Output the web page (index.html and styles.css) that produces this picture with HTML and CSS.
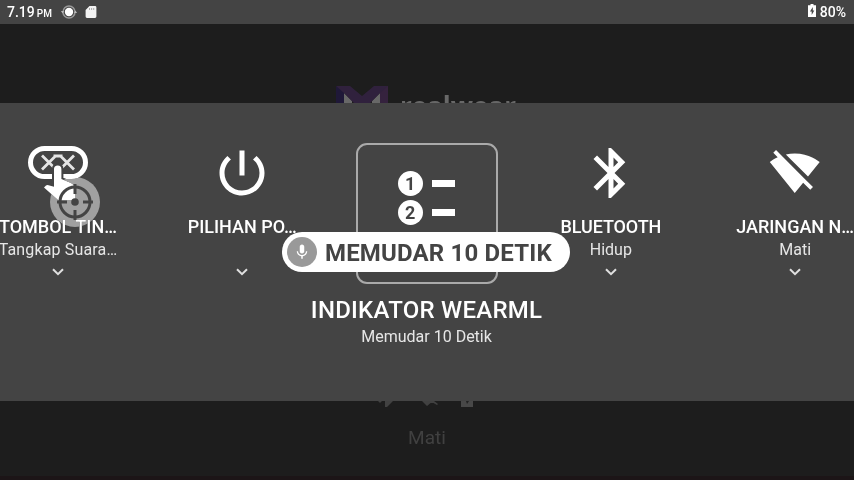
FILE: index.html
```
<!DOCTYPE html>
<html lang="id">
<head>
<meta charset="utf-8">
<title>Indikator WearML</title>
<link rel="stylesheet" href="styles.css">
</head>
<body>
<header class="status">
  <span class="time">7.19<small>PM</small></span>
  <svg class="status-cam" viewBox="0 0 16 16"><circle cx="8" cy="8" r="6" fill="none" stroke="#999" stroke-width="1.500"/><circle cx="8" cy="8" r="4.200" fill="#fff"/><path d="M0 7h3L1.500 9.500zM13 9h3l-1.500-2.500z" fill="#bbb"/></svg>
  <svg class="status-sd" viewBox="0 0 12 14"><path d="M4.500 1H10a1.400 1.400 0 0 1 1.400 1.400v9.200A1.400 1.400 0 0 1 10 13H2A1.400 1.400 0 0 1 .6 11.600V5z" fill="#f3f3f3"/><path d="M4.500 3v2M6.600 3v2M8.700 3v2" stroke="#999" stroke-width=".8"/></svg>
  <svg class="status-battery" viewBox="0 0 8 14"><path d="M2.500 0h3v1.300H8V13H0V1.300h2.500z" fill="#fff"/><path d="M4.800 3L2 7.600h1.700V11L6.300 6.400H4.800z" fill="#444"/></svg>
  <span class="percent">80%</span>
</header>
<main class="screen">
  <div class="home-top">
    <svg class="logo" viewBox="0 0 52 52"><path d="M8 7l8 8v37H8zM44 7l-8 8v37h8z" fill="#686868"/><path d="M0 0h14l12 10L38 0h14v52h-8V7L26 25 8 7v5z" fill="#30213d"/><path d="M0 0l8 7v45H0z" fill="#1f1838"/><path d="M44 7l8-7v52h-8z" fill="#35223e"/></svg>
    <span class="brand">realwear</span>
  </div>
  <section class="panel">
    <div class="cards">
      <article class="card">
        <div class="icon"><svg width="60" height="60" viewBox="28 143 60 60"><rect x="30.500" y="148.500" width="55" height="28" rx="14" fill="none" stroke="#fff" stroke-width="5"/><path d="M42 155.500l14 14M56 155.500l-14 14M60 155.500l14 14M74 155.500l-14 14M53.500 156h9" fill="none" stroke="#e5e5e5" stroke-width="2.800"/><path d="M54 169q0-3.500 3.700-3.500t3.700 3.500v10l9.600 4q4 2 4 6V200H58l-14-12.500 2-2q1-.8 2.500-.3l5.500 1.500z" fill="#fff" stroke="#444" stroke-width="4" paint-order="stroke"/></svg></div>
        <h3>TOMBOL TIN…</h3><p class="wide">Tangkap Suara…</p>
        <svg class="chevron" viewBox="0 0 12 8"><path d="M1 1.200l5 5 5-5"/></svg>
      </article>
      <article class="card">
        <div class="icon"><svg width="60" height="60" viewBox="0 0 24 24"><path fill="#fff" d="M13 3h-2v10h2V3zm4.830 2.170l-1.420 1.420C17.990 7.860 19 9.810 19 12c0 3.870-3.130 7-7 7s-7-3.130-7-7c0-2.190 1.010-4.140 2.580-5.420L6.170 5.170C4.230 6.820 3 9.260 3 12c0 4.970 4.030 9 9 9s9-4.030 9-9c0-2.740-1.230-5.180-3.170-6.830z"/></svg></div>
        <h3>PILIHAN PO…</h3><p>&nbsp;</p>
        <svg class="chevron" viewBox="0 0 12 8"><path d="M1 1.200l5 5 5-5"/></svg>
      </article>
      <article class="card selected">
        <div class="frame"><div class="levels"><b>1</b><i></i><b>2</b><i></i></div></div>
        <h2>INDIKATOR WEARML</h2><p>Memudar 10 Detik</p>
      </article>
      <article class="card">
        <div class="icon"><svg width="60" height="60" viewBox="0 0 24 24"><path fill="#fff" d="M17.710 7.710L12 2h-1v7.590L6.410 5 5 6.410 10.590 12 5 17.590 6.410 19 11 14.410V22h1l5.710-5.710-4.300-4.290 4.300-4.290zM13 5.830l1.880 1.880L13 9.590V5.830zm1.880 10.460L13 18.170v-3.760l1.880 1.880z"/></svg></div>
        <h3 class="tight">BLUETOOTH</h3><p>Hidup</p>
        <svg class="chevron" viewBox="0 0 12 8"><path d="M1 1.200l5 5 5-5"/></svg>
      </article>
      <article class="card">
        <div class="icon"><svg width="51.500" height="51.500" viewBox="0 0 24 24"><path fill="#fff" d="M23.640 7c-.45-.34-4.930-4-11.640-4-1.500 0-2.890.19-4.150.48L18.180 13.800 23.640 7zm-6.600 8.220L3.270 1.440 2 2.720l2.050 2.060C1.910 5.760.59 6.820.36 7l11.630 14.490.01.01.01-.01 3.900-4.860 3.320 3.320 1.270-1.270-3.460-3.460z"/></svg></div>
        <h3>JARINGAN N…</h3><p>Mati</p>
        <svg class="chevron" viewBox="0 0 12 8"><path d="M1 1.200l5 5 5-5"/></svg>
      </article>
    </div>
  </section>
  <div class="home-bottom">
    <svg class="mini" viewBox="0 0 100 8"><path d="M1 0l2 2 2-2zM8 0h8l-6 6H8zM45 0h11l-6 5zM53 0h4l4 3-1 1z" fill="#414141"/><path d="M84 0h12v6H84z" fill="#484848"/><path d="M89 0h3l-2 3z" fill="#222"/></svg>
    <span>Mati</span>
  </div>
</main>
<div class="target disc"></div>
<svg class="target" viewBox="0 0 50 50"><circle cx="25" cy="25" r="15" fill="none" stroke="#444" stroke-width="3"/><circle cx="25" cy="25" r="3.800" fill="#444"/><path d="M25 7v10M25 33v10M7 25h10M33 25h10" stroke="#444" stroke-width="3"/></svg>
<div class="voice"><span class="mic"><svg width="18" height="18" viewBox="0 0 24 24"><path fill="#fff" d="M12 14c1.660 0 2.990-1.340 2.990-3L15 5c0-1.660-1.340-3-3-3S9 3.340 9 5v6c0 1.660 1.340 3 3 3zm5.300-3c0 3-2.540 5.100-5.300 5.100S6.700 14 6.700 11H5c0 3.410 2.720 6.230 6 6.720V21h2v-3.280c3.280-.48 6-3.300 6-6.720h-1.700z"/></svg></span><strong>MEMUDAR 10 DETIK</strong></div>
</body>
</html>
```
FILE: styles.css
```
* { box-sizing: border-box; }
body { margin: 0; width: 854px; height: 480px; overflow: hidden; position: relative; background: #1d1d1d; color: #fff; font-family: Roboto, sans-serif; display: flex; flex-direction: column; }
h2, h3, p { margin: 0; white-space: nowrap; text-align: center; }
svg { display: block; flex: none; }
.status { height: 24px; background: #444; display: flex; align-items: center; padding: 0 8px 0 7px; font-size: 14px; font-weight: 500; }
.time { width: 54px; font-size: 14px; }
.time small { font-size: 10px; margin-left: 2px; }
.status-cam { width: 16px; height: 16px; margin-right: 8px; }
.status-sd { width: 12px; height: 14px; }
.status-battery { width: 8px; height: 14px; margin-left: auto; margin-right: 4px; margin-bottom: 3px; }
.screen { flex: 1; display: flex; flex-direction: column; border-bottom: 4px solid #1c1517; }
.home-top { height: 79px; padding: 62px 0 0 336px; display: flex; overflow: hidden; align-items: flex-start; }
.logo { width: 52px; height: 52px; }
.brand { font: bold 26px/32px "Open Sans", sans-serif; color: #686868; margin: 4px 0 0 12px; }
.panel { height: 298px; background: #444; overflow: hidden; }
.cards { display: grid; grid-template-columns: repeat(5, 184.300px); width: 921.500px; margin-left: -34.200px; padding-top: 40px; }
.card { display: flex; flex-direction: column; align-items: center; }
.icon { height: 60px; display: flex; align-items: center; }
.card h3 { font-size: 18px; line-height: 24px; font-weight: 500; margin-top: 12px; }
.card .tight { letter-spacing: -.1px; }
.card p { font-size: 16px; line-height: 22px; color: #e6e6e6; }
.card .wide { letter-spacing: .15px; }
.chevron { width: 12px; height: 8px; margin-top: 7px; }
.chevron path { fill: none; stroke: #e0e0e0; stroke-width: 2; }
.frame { width: 142px; height: 141px; border: 2px solid #aaa; border-radius: 11px; padding: 26px 0 0 40px; }
.levels { display: grid; grid-template-columns: 25px 23px; column-gap: 9px; row-gap: 4px; align-items: center; }
.levels b { width: 25px; height: 25px; border-radius: 50%; background: #fff; color: #444; font-size: 18px; line-height: 26px; text-align: center; }
.levels i { height: 7px; background: #fff; }
.selected h2 { font-size: 24px; line-height: 30px; font-weight: 500; margin-top: 11px; letter-spacing: .25px; }
.selected p { margin-top: 1px; }
.home-bottom { flex: 1; display: flex; flex-direction: column; align-items: center; color: #404040; font-size: 19px; line-height: 24px; }
.mini { width: 100px; height: 8px; margin-bottom: 17px; }
.target { position: absolute; left: 50px; top: 177px; width: 50px; height: 50px; }
.disc { border-radius: 50%; background: #a0a0a0; mix-blend-mode: lighten; }
.voice { position: absolute; left: 282px; top: 232px; width: 288px; height: 40px; border-radius: 20px; background: #fff; color: #444; display: flex; align-items: center; padding-left: 5px; }
.mic { width: 30px; height: 30px; border-radius: 50%; background: #999; display: flex; align-items: center; justify-content: center; margin-right: 8px; }
.voice strong { font-size: 24px; line-height: 40px; font-weight: 700; white-space: nowrap; padding-top: 2px; letter-spacing: .17px; }
```
